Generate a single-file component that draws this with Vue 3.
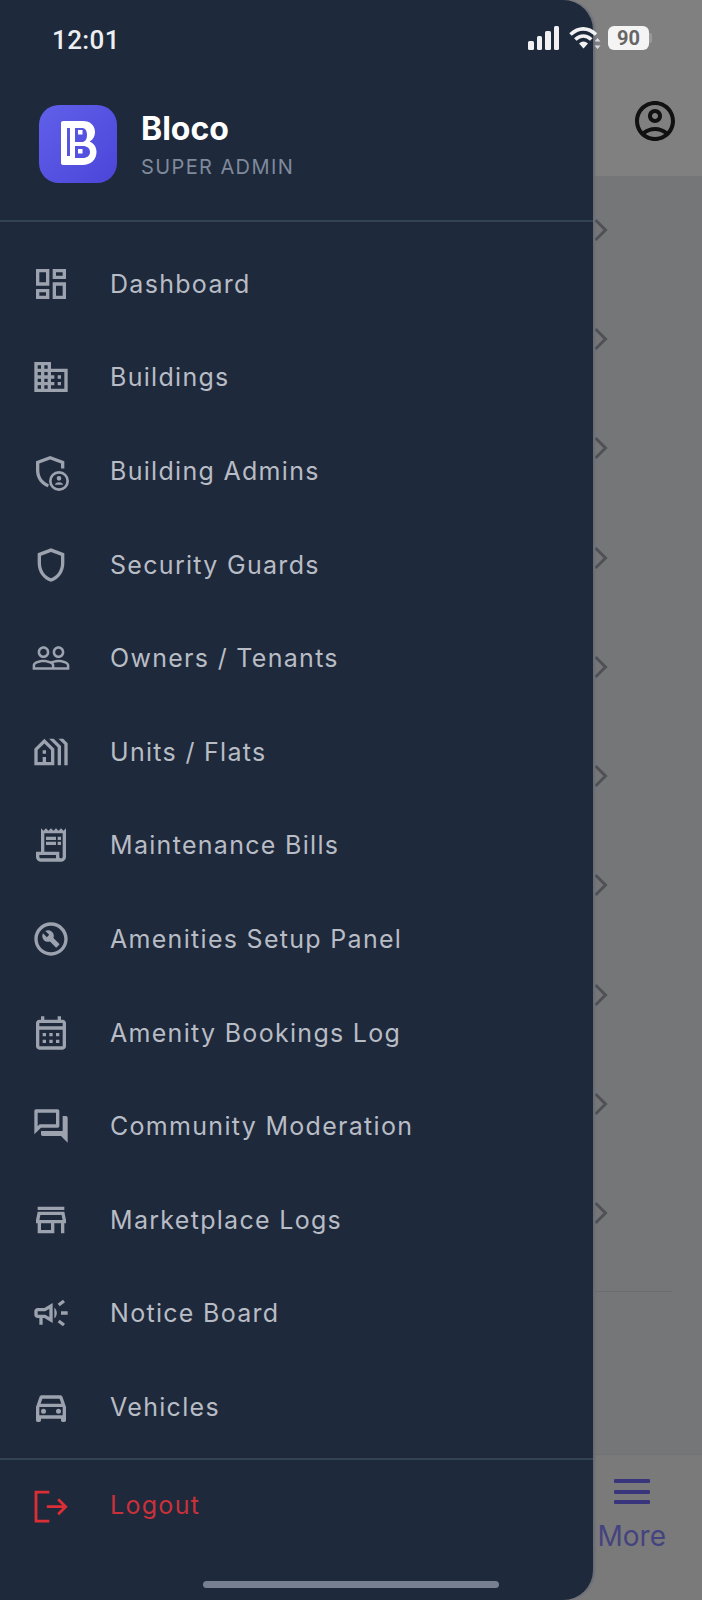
<script setup>
const menu = [
  { label: "Dashboard", paths: ["M19 5v2h-4V5h4M9 5v6H5V5h4m10 8v6h-4v-6h4M9 17v2H5v-2h4M21 3h-8v6h8V3zM11 3H3v10h8V3zm10 8h-8v10h8V11zm-10 4H3v6h8v-6z"] },
  { label: "Buildings", paths: ["M12 7V3H2v18h20V7H12zM6 19H4v-2h2v2zm0-4H4v-2h2v2zm0-4H4V9h2v2zm0-4H4V5h2v2zm4 12H8v-2h2v2zm0-4H8v-2h2v2zm0-4H8V9h2v2zm0-4H8V5h2v2zm10 12h-8v-2h2v-2h-2v-2h2v-2h-2V9h8v10zm-2-8h-2v2h2v-2zm0 4h-2v2h2v-2z"] },
  { label: "Building Admins", paths: ["M11.5 3L3 6.1v5.6c0 4.6 3 8.8 7.2 10.1l.5-1.9C7.3 18.7 5 15.4 5 11.7V7.5l6.5-2.4L18 7.5v3h2V6.1L11.5 3z", "M16.8 12a6 6 0 1 0 0 12 6 6 0 0 0 0-12zm0 1.6a4.4 4.4 0 1 1 0 8.8 4.4 4.4 0 0 1 0-8.8z", "M16.8 15a1.4 1.4 0 1 0 0 2.8 1.4 1.4 0 0 0 0-2.8zM14.3 20.2c.5-.9 1.4-1.4 2.5-1.4s2 .5 2.5 1.4z"] },
  { label: "Security Guards", paths: ["M12 2L4 5v6.09c0 5.05 3.41 9.76 8 10.91 4.59-1.15 8-5.86 8-10.91V5l-8-3zm6 9.09c0 4-2.55 7.7-6 8.83-3.45-1.13-6-4.82-6-8.83v-4.7l6-2.25 6 2.25v4.7z"] },
  { label: "Owners / Tenants", paths: ["M16.5 13c-1.2 0-3.07.34-4.5 1-1.43-.67-3.3-1-4.5-1C5.33 13 1 14.08 1 16.25V19h22v-2.75c0-2.17-4.33-3.25-6.5-3.25zm-4 4.5h-10v-1.25c0-.54 2.56-1.75 5-1.75s5 1.21 5 1.75v1.25zm9 0H14v-1.25c0-.46-.2-.86-.52-1.22.88-.3 1.96-.53 3.02-.53 2.44 0 5 1.21 5 1.75v1.25zM7.5 12c1.93 0 3.5-1.57 3.5-3.5S9.43 5 7.5 5 4 6.57 4 8.5 5.57 12 7.5 12zm0-5.5c1.1 0 2 .9 2 2s-.9 2-2 2-2-.9-2-2 .9-2 2-2zm9 5.5c1.93 0 3.5-1.57 3.5-3.5S18.43 5 16.5 5 13 6.57 13 8.5s1.57 3.5 3.5 3.5zm0-5.5c1.1 0 2 .9 2 2s-.9 2-2 2-2-.9-2-2 .9-2 2-2z"] },
  { label: "Units / Flats", paths: ["M8 4l-6 6v10h12V10L8 4zM12 18H9v-3H7v3H4v-7.17l4-4 4 4V18zM9 13H7v-2h2V13zM18 20V8.35L13.65 4h-2.83L16 9.18V20H18zM22 20V6.69L19.31 4h-2.83L20 7.52V20H22z"] },
  { label: "Maintenance Bills", paths: ["M19.5 3.5L18 2l-1.5 1.5L15 2l-1.5 1.5L12 2l-1.5 1.5L9 2 7.5 3.5 6 2v14H3v3c0 1.66 1.34 3 3 3h12c1.66 0 3-1.34 3-3V2l-1.5 1.5zM15 20H6c-.55 0-1-.45-1-1v-1h10v2zm4-1c0 .55-.45 1-1 1s-1-.45-1-1v-3H8V5h11v14z", "M9 7h6v2H9zm7 0h2v2h-2zM9 10h6v2H9zm7 0h2v2h-2z"] },
  { label: "Amenities Setup Panel", paths: ["M12 2C6.48 2 2 6.48 2 12s4.48 10 10 10 10-4.48 10-10S17.52 2 12 2zm0 18c-4.41 0-8-3.59-8-8s3.59-8 8-8 8 3.59 8 8-3.59 8-8 8z", "M13.49 11.38c.43-1.22.17-2.64-.81-3.62-1.11-1.11-2.79-1.3-4.1-.59l2.35 2.35-1.41 1.41-2.35-2.35c-.71 1.32-.52 2.99.59 4.1.98.98 2.4 1.24 3.62.81l3.41 3.41c.2.2.51.2.71 0l1.4-1.4c.2-.2.2-.51 0-.71l-3.41-3.41z"] },
  { label: "Amenity Bookings Log", paths: ["M19 4h-1V2h-2v2H8V2H6v2H5c-1.1 0-2 .9-2 2v14c0 1.1.9 2 2 2h14c1.1 0 2-.9 2-2V6c0-1.1-.9-2-2-2zm0 16H5V10h14v10zm0-12H5V6h14v2zM9 14H7v-2h2v2zm4 0h-2v-2h2v2zm4 0h-2v-2h2v2zm-8 4H7v-2h2v2zm4 0h-2v-2h2v2zm4 0h-2v-2h2v2z"] },
  { label: "Community Moderation", paths: ["M15 4v7H5.17L4 12.17V4h11m1-2H3c-.55 0-1 .45-1 1v14l4-4h10c.55 0 1-.45 1-1V3c0-.55-.45-1-1-1zm5 4h-2v9H6v2c0 .55.45 1 1 1h11l4 4V7c0-.55-.45-1-1-1z"] },
  { label: "Marketplace Logs", paths: ["M18.36 9l.6 3H5.04l.6-3h12.72M20 4H4v2h16V4zm0 3H4l-1 5v2h1v6h10v-6h4v6h2v-6h1v-2l-1-5zM6 18v-4h6v4H6z"] },
  { label: "Notice Board", paths: ["M18 11v2h4v-2h-4zm-2 6.61c.96.71 2.21 1.65 3.2 2.39.4-.53.8-1.07 1.2-1.6-.99-.74-2.24-1.68-3.2-2.4-.4.54-.8 1.08-1.2 1.61zM20.4 5.6c-.4-.53-.8-1.07-1.2-1.6-.99.74-2.24 1.68-3.2 2.4.4.53.8 1.07 1.2 1.6.96-.72 2.21-1.65 3.2-2.4zM4 9c-1.1 0-2 .9-2 2v2c0 1.1.9 2 2 2h1v4h2v-4h1l5 3V6L8 9H4zm5.03 1.71L11 9.53v4.94l-1.97-1.18-.48-.29H4v-2h4.55l.48-.29zM15.5 12c0-1.33-.58-2.53-1.5-3.35v6.69c.92-.81 1.5-2.01 1.5-3.34z"] },
  { label: "Vehicles", paths: ["M18.92 6.01C18.72 5.42 18.16 5 17.5 5h-11c-.66 0-1.21.42-1.42 1.01L3 12v8c0 .55.45 1 1 1h1c.55 0 1-.45 1-1v-1h12v1c0 .55.45 1 1 1h1c.55 0 1-.45 1-1v-8l-2.08-5.99zM6.85 7h10.29l1.08 3.11H5.77L6.85 7zM19 17H5v-5h14v5z", "M6 14.5a1.5 1.5 0 1 0 3 0 1.5 1.5 0 0 0-3 0zm9 0a1.5 1.5 0 1 0 3 0 1.5 1.5 0 0 0-3 0z"] },
];

const chevrons = Array.from({ length: 10 }, (_, i) => i);
</script>

<template>
  <div class="screen">
    <!-- page behind the drawer -->
    <div class="page">
      <header class="pageHeader">
        <svg class="userIcon" viewBox="0 0 24 24">
          <path d="M12 2C6.48 2 2 6.48 2 12s4.48 10 10 10 10-4.48 10-10S17.52 2 12 2zM7.35 18.5C8.66 17.56 10.26 17 12 17s3.34.56 4.65 1.5C15.34 19.44 13.74 20 12 20s-3.34-.56-4.65-1.5zm10.79-1.38C16.45 15.8 14.32 15 12 15s-4.45.8-6.14 2.12C4.7 15.73 4 13.95 4 12c0-4.42 3.58-8 8-8s8 3.58 8 8c0 1.95-.7 3.73-1.86 5.12z" />
          <path d="M12 6c-1.93 0-3.5 1.57-3.5 3.5S10.07 13 12 13s3.5-1.57 3.5-3.5S13.93 6 12 6zm0 5c-.83 0-1.5-.67-1.5-1.5S11.17 8 12 8s1.5.67 1.5 1.5S12.83 11 12 11z" />
        </svg>
      </header>
      <div class="pageList">
        <div v-for="c in chevrons" :key="c" class="pageRow">
          <svg class="chevron" viewBox="0 0 14 24">
            <path d="M1.500 2l10 10-10 10" />
          </svg>
        </div>
      </div>
      <div class="pageDivider"></div>
      <nav class="tabBar">
        <div class="tab">
          <div class="burger"><span></span><span></span><span></span></div>
          <span class="tabLabel">More</span>
        </div>
      </nav>
    </div>

    <!-- drawer -->
    <aside class="drawer">
      <div class="brand">
        <div class="logo">
          <svg viewBox="0 0 78 78" width="78" height="78">
            <path fill="#fff" fill-rule="evenodd" d="M24 16h20c7.500 0 12 4.800 12 11 0 4.300-2 7.800-5.500 9.600 4.500 1.800 7 5.500 7 10.400 0 7.800-5.800 13-14 13H24c-1.200 0-2-.8-2-2V18c0-1.200.8-2 2-2zM28 23v28h3V23zM36 23v14h7c3 0 5-2.600 5-7s-2-7-5-7zM36 41v12h8c4 0 7-2.300 7-6s-3-6-7-6z" />
            <path fill="#fff" d="M39 25h4.500v4.500H39zM39 44h4.500v4.500H39z" />
          </svg>
        </div>
        <div class="brandText">
          <div class="brandName">Bloco</div>
          <div class="brandRole">SUPER ADMIN</div>
        </div>
      </div>

      <nav class="menu">
        <a v-for="item in menu" :key="item.label" class="menuItem">
          <svg class="menuIcon" viewBox="0 0 24 24">
            <path v-for="d in item.paths" :key="d" :d="d" />
          </svg>
          <span class="menuLabel">{{ item.label }}</span>
        </a>
      </nav>

      <div class="drawerFooter">
        <a class="menuItem logout">
          <svg class="menuIcon" viewBox="0 0 24 24">
            <path class="logoutStroke" d="M11 4.300H3v17.400h8M9.500 13h11.300M16.300 8.500l4.500 4.500-4.500 4.500" />
          </svg>
          <span class="menuLabel">Logout</span>
        </a>
      </div>
    </aside>

    <!-- system chrome on top of everything -->
    <div class="statusBar">
      <span class="clock">12:01</span>
      <div class="statusIcons">
        <div class="signal"><i></i><i></i><i></i><i></i></div>
        <svg class="wifi" viewBox="0 0 32 24" width="32" height="24">
          <path fill="none" stroke="#f1f1f4" stroke-width="3.600" d="M1.500 8.500C9.500 1 19 1 27 8.500M6.300 13.500c5-4.600 11-4.600 16 0" />
          <path fill="#f1f1f4" d="M10 17.500c3-2.800 6-2.800 9 0l-4.500 5z" />
          <path fill="#d9dade" d="M28.500 12l3 3.500h-6zM28.500 23l-3-3.500h6z" />
        </svg>
        <div class="battery"><span>90</span></div>
      </div>
    </div>
    <div class="homeBar"></div>
  </div>
</template>

<style scoped>
.screen {
  position: relative;
  width: 702px;
  height: 1600px;
  overflow: hidden;
  background: #757678;
  font-family: Inter, "Liberation Sans", sans-serif;
}

.page {
  display: flex;
  flex-direction: column;
  height: 100%;
}
.pageHeader {
  display: flex;
  justify-content: flex-end;
  height: 176px;
  padding: 97px 23px 0 0;
  box-sizing: border-box;
  background: #808080;
}
.userIcon {
  width: 48px;
  height: 48px;
  fill: #111;
}
.pageList {
  margin-top: -1px;
  padding: 0 0 0 594px;
}
.pageRow {
  display: flex;
  align-items: center;
  height: 109.3px;
}
.chevron {
  width: 14px;
  height: 24px;
  fill: none;
  stroke: #4f5157;
  stroke-width: 3;
}
.pageDivider {
  height: 1px;
  margin: 23px 30px 0 593px;
  background: #6b6c6f;
}
.tabBar {
  display: flex;
  justify-content: flex-end;
  box-sizing: border-box;
  height: 146px;
  margin-top: auto;
  padding: 24px 36px 0 0;
  background: #7a7a7b;
  border-top: 1px solid #717274;
}
.tab {
  display: flex;
  flex-direction: column;
  align-items: center;
  gap: 17px;
}
.burger {
  display: flex;
  flex-direction: column;
  gap: 6.500px;
  width: 36px;
}
.burger span {
  height: 4px;
  border-radius: 1px;
  background: #38357c;
}
.tabLabel {
  font-size: 28px;
  line-height: 30px;
  color: #45437f;
}

.drawer {
  position: absolute;
  top: 0;
  left: 0;
  bottom: 0;
  display: flex;
  flex-direction: column;
  width: 593px;
  background: #1e293b;
  border-radius: 0 30px 30px 0;
  box-shadow: 2px 0 2px #6a6d76;
}
.brand {
  display: flex;
  align-items: center;
  gap: 24px;
  height: 222px;
  padding: 67px 39px 0;
  box-sizing: border-box;
  border-bottom: 2px solid #334155;
}
.logo {
  width: 78px;
  height: 78px;
  border-radius: 20px;
  background: linear-gradient(135deg, #6060ea, #4b45d8);
}
.logo svg {
  display: block;
}
.brandText {
  padding-top: 4px;
}
.brandName {
  font-size: 32px;
  line-height: 36px;
  font-weight: 700;
  color: #fff;
}
.brandRole {
  margin-top: 7px;
  font-size: 20px;
  line-height: 26px;
  letter-spacing: 1.400px;
  color: #7f8a9b;
}

.menu {
  display: flex;
  flex-direction: column;
  padding-top: 15px;
}
.menuItem {
  display: flex;
  align-items: center;
  gap: 39px;
  height: 93.6px;
  padding-left: 31px;
}
.menuIcon {
  flex: none;
  width: 40px;
  height: 40px;
  fill: #9ca3af;
}
.menuLabel {
  font-size: 25px;
  letter-spacing: 1.300px;
  color: #b8bcc5;
}
.drawerFooter {
  margin-top: 4px;
  border-top: 2px solid #334155;
}
.logout {
  height: 91px;
}
.logout .menuLabel {
  color: #c9313a;
}
.logoutStroke {
  fill: none;
  stroke: #dc2f35;
  stroke-width: 1.700;
}

.statusBar {
  position: absolute;
  top: 0;
  left: 0;
  right: 0;
  display: flex;
  align-items: center;
  justify-content: space-between;
  height: 76px;
  padding: 0 53px 0 52px;
  box-sizing: border-box;
}
.clock {
  padding-top: 3px;
  font-family: Roboto, sans-serif;
  font-size: 26px;
  font-weight: 500;
  letter-spacing: 0.4px;
  color: #eceef1;
}
.statusIcons {
  display: flex;
  align-items: flex-end;
  gap: 7px;
}
.signal {
  display: flex;
  align-items: flex-end;
  gap: 3px;
  margin-right: 3px;
}
.signal i {
  width: 5.500px;
  border-radius: 1.500px;
  background: #f1f1f4;
}
.signal i:nth-child(1) { height: 9px; }
.signal i:nth-child(2) { height: 14px; }
.signal i:nth-child(3) { height: 19px; }
.signal i:nth-child(4) { height: 24px; }
.battery {
  position: relative;
  display: flex;
  align-items: center;
  justify-content: center;
  width: 41px;
  height: 24px;
  border-radius: 6px;
  background: #f4f4f4;
}
.battery::after {
  content: "";
  position: absolute;
  left: 41px;
  top: 7px;
  width: 3px;
  height: 10px;
  border-radius: 0 2px 2px 0;
  background: #9a9a9a;
}
.battery span {
  font-family: Roboto, sans-serif;
  font-size: 20px;
  font-weight: 700;
  color: #666;
}
.homeBar {
  position: absolute;
  left: 203px;
  top: 1581px;
  width: 296px;
  height: 7px;
  border-radius: 4px;
  background: #778091;
}
</style>
